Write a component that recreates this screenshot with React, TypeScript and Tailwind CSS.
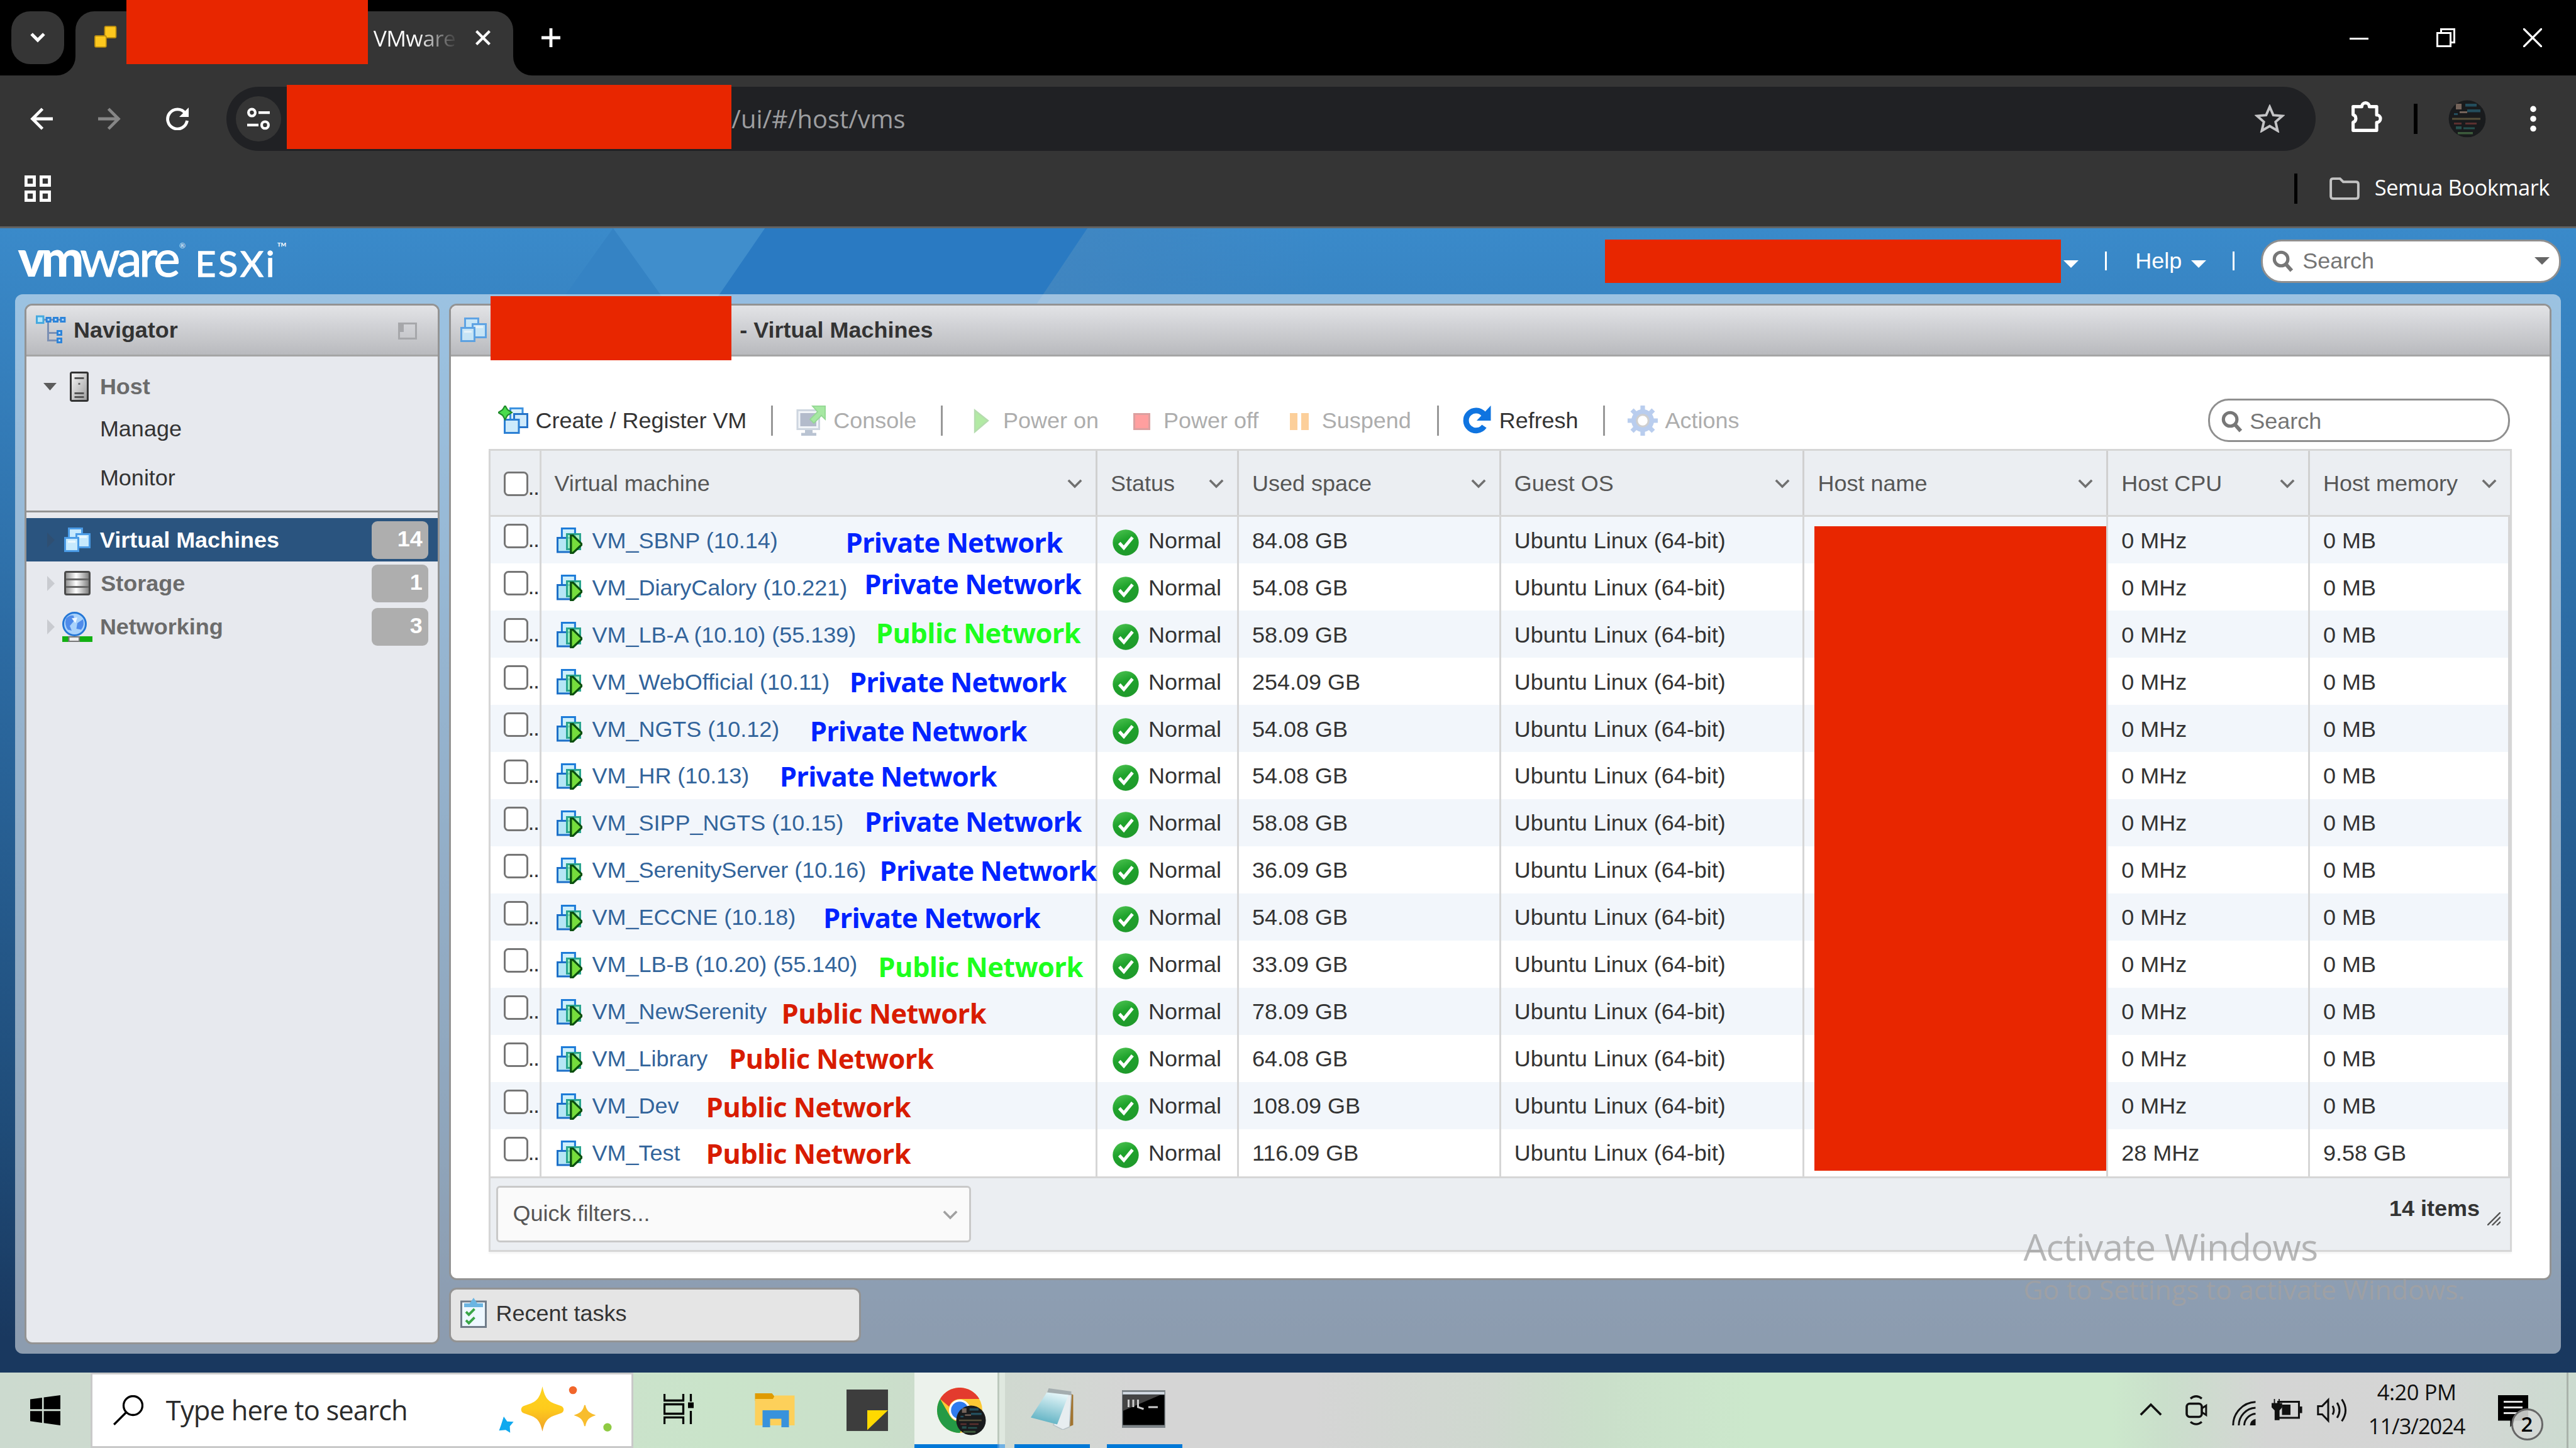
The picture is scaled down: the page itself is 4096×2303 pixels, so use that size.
import React from "react";

type Vm = {
  name: string;
  space: string;
  net: "private" | "green" | "red";
  x: number;
  y: number;
  cpu?: string;
  mem?: string;
};

const VMS: Vm[] = [
  { name: "VM_SBNP (10.14)", space: "84.08 GB", net: "private", x: 449.6, y: 293.6 },
  { name: "VM_DiaryCalory (10.221)", space: "54.08 GB", net: "private", x: 459.5, y: 315.4 },
  { name: "VM_LB-A (10.10) (55.139)", space: "58.09 GB", net: "green", x: 465.7, y: 341.6 },
  { name: "VM_WebOfficial (10.11)", space: "254.09 GB", net: "private", x: 451.7, y: 367.6 },
  { name: "VM_NGTS (10.12)", space: "54.08 GB", net: "private", x: 430.7, y: 393.4 },
  { name: "VM_HR (10.13)", space: "54.08 GB", net: "private", x: 414.7, y: 417.6 },
  { name: "VM_SIPP_NGTS (10.15)", space: "58.08 GB", net: "private", x: 459.7, y: 441.4 },
  { name: "VM_SerenityServer (10.16)", space: "36.09 GB", net: "private", x: 467.6, y: 467.6 },
  { name: "VM_ECCNE (10.18)", space: "54.08 GB", net: "private", x: 437.8, y: 492.6 },
  { name: "VM_LB-B (10.20) (55.140)", space: "33.09 GB", net: "green", x: 466.9, y: 518.5 },
  { name: "VM_NewSerenity", space: "78.09 GB", net: "red", x: 415.6, y: 543.3 },
  { name: "VM_Library", space: "64.08 GB", net: "red", x: 387.7, y: 567.3 },
  { name: "VM_Dev", space: "108.09 GB", net: "red", x: 375.6, y: 592.8 },
  { name: "VM_Test", space: "116.09 GB", net: "red", x: 375.6, y: 617.5, cpu: "28 MHz", mem: "9.58 GB" },
];

const NET_STYLE = {
  private: "text-[#0022ff] tracking-[-0.290px]",
  green: "text-[#1dff1d] tracking-[-0.210px]",
  red: "text-[#d81c00] tracking-[-0.210px]",
};

const COLS = "grid grid-cols-[27px_295px_75px_139px_161px_161px_107px_106px]";

function Redact({ className }: { className: string }) {
  return <div className={`absolute bg-[#e82600] ${className}`} />;
}

/* ---------- Icons ---------- */

function VmsIcon({ className = "", dim = false }: { className?: string; dim?: boolean }) {
  return (
    <svg viewBox="0 0 14 13" className={className} opacity={dim ? 0.85 : 1}>
      <g fill="#c6e9fd" stroke="#4a9be6" strokeWidth="1">
        <rect x="2.5" y=".5" width="7" height="7" />
        <rect x="6.5" y="3.5" width="7" height="7" />
        <rect x=".5" y="5.5" width="7" height="7" />
      </g>
      <path d="M2 7.5h4M8 5h4" stroke="#e9f8ff" strokeWidth="1.2" />
    </svg>
  );
}

function VmOnIcon() {
  return (
    <svg viewBox="0 0 14 14" className="h-[14px] w-[14px] shrink-0">
      <rect x="2.8" y=".5" width="7" height="6" fill="#cdeffc" stroke="#1c7bd8" />
      <rect x=".5" y="5.5" width="7.5" height="7.500" fill="#b5e6f5" stroke="#1c6fc8" />
      <rect x="5.500" y="3.500" width="7" height="8" fill="#8fefaf" fillOpacity=".75" stroke="#2aa58f" />
      <path d="M7.600 4.200v9.300h1.100l4.800-4.600-4.800-4.700z" fill="#76dd3c" stroke="#0b4f10" strokeWidth="1.100" />
    </svg>
  );
}

function CheckIcon() {
  return (
    <svg viewBox="0 0 14 14" className="h-[14px] w-[14px] shrink-0">
      <defs>
        <linearGradient id="okg" x1="0" y1="0" x2="0.4" y2="1">
          <stop offset="0" stopColor="#52c655" />
          <stop offset="0.5" stopColor="#1fa32c" />
          <stop offset="1" stopColor="#1f9a2b" />
        </linearGradient>
      </defs>
      <circle cx="7" cy="7" r="6.9" fill="url(#okg)" />
      <path d="M3.6 7.2l2.4 2.6 4.6-5.6" fill="none" stroke="#fff" strokeWidth="1.7" />
    </svg>
  );
}

function Chevron({ className = "", color = "#707070" }: { className?: string; color?: string }) {
  return (
    <svg viewBox="0 0 8 5" className={`h-[5px] w-[8px] ${className}`}>
      <path d="M.6.6L4 4 7.4.6" fill="none" stroke={color} strokeWidth="1.2" />
    </svg>
  );
}

function CaretDown({ className = "", color = "#fff" }: { className?: string; color?: string }) {
  return (
    <svg viewBox="0 0 8 4" className={`h-[4px] w-[8px] shrink-0 ${className}`}>
      <path d="M0 0h8L4 4z" fill={color} />
    </svg>
  );
}

function SearchIcon({ className = "" }: { className?: string }) {
  return (
    <svg viewBox="0 0 12 12" className={`h-[12px] w-[12px] shrink-0 ${className}`}>
      <circle cx="4.700" cy="5" r="3.600" fill="none" stroke="#777" strokeWidth="1.7" />
      <path d="M7.300 7.800l3 3.400" stroke="#777" strokeWidth="2" />
    </svg>
  );
}

function Avatar({ className = "" }: { className?: string }) {
  return (
    <svg viewBox="0 0 20 20" className={className}>
      <defs>
        <clipPath id="avc">
          <circle cx="10" cy="10" r="9.8" />
        </clipPath>
      </defs>
      <g clipPath="url(#avc)">
        <rect width="20" height="20" fill="#191b1d" />
        <path d="M4 2h3v3H4zM6 6h4v1H6z" fill="#74635a" />
        <path d="M9 2h6v1.500H9zM10 5h7v1.500h-7zM3 7h2v1H3z" fill="#234d5c" />
        <path d="M2 9.500h15v1H2z" fill="#57503a" />
        <path d="M3 12h4v1H3zM9 12h6v1H9z" fill="#5b302f" />
        <path d="M4 14h3v1.500H4zM8 14.500h6v1H8z" fill="#26504e" />
        <path d="M5 17h8v1.200H5z" fill="#3c5a3c" />
      </g>
    </svg>
  );
}

/* ---------- Browser chrome ---------- */

function TabStrip() {
  return (
    <div className="relative flex h-[40px] items-start bg-black text-white">
      <div className="ml-[6px] mt-[6px] flex h-[28px] w-[28px] items-center justify-center rounded-[10px] bg-[#353535]">
        <svg viewBox="0 0 8 6" className="h-[6px] w-[8px]">
          <path d="M.7 1L4 4.300 7.300 1" fill="none" stroke="#fff" strokeWidth="1.700" />
        </svg>
      </div>
      <div className="relative ml-[6px] mt-[6px] flex h-[34px] w-[232px] rounded-t-[10px] bg-[#353535]">
        <svg viewBox="0 0 10 10" className="absolute -left-[10px] bottom-0 h-[10px] w-[10px]">
          <path d="M10 0v10H0A10 10 0 0 0 10 0z" fill="#353535" />
        </svg>
        <svg viewBox="0 0 10 10" className="absolute -right-[10px] bottom-0 h-[10px] w-[10px]">
          <path d="M0 0v10h10A10 10 0 0 1 0 0z" fill="#353535" />
        </svg>
        <svg viewBox="0 0 12 11" className="ml-[10px] mt-[8px] h-[11px] w-[12px] overflow-visible">
          <rect x="5.500" y="0" width="6" height="6" rx=".7" fill="#fdc81e" stroke="#b98d11" strokeWidth=".6" />
          <rect x="0.300" y="5" width="6" height="6" rx=".7" fill="#fdc81e" stroke="#b98d11" strokeWidth=".6" />
        </svg>
        <div className="ml-[136px] mt-[5.500px] w-[46px] whitespace-nowrap bg-gradient-to-r from-white from-50% to-[#353535] to-98% bg-clip-text font-['Open_Sans'] text-[11.800px] leading-[18px] tracking-[-0.200px] text-transparent">
          VMware
        </div>
        <svg viewBox="0 0 8 8" className="ml-[8px] mt-[10px] h-[8px] w-[8px]">
          <path d="M.5.5l7 7M7.500.5l-7 7" stroke="#fff" strokeWidth="1.400" />
        </svg>
      </div>
      <svg viewBox="0 0 10 10" className="ml-[15px] mt-[15px] h-[10px] w-[10px]">
        <path d="M5 0v10M0 5h10" stroke="#fff" strokeWidth="1.600" />
      </svg>
      <div className="ml-auto mr-[18px] mt-[15px] flex gap-[36px]">
        <svg viewBox="0 0 10 10" className="h-[10px] w-[10px]">
          <path d="M0 5.500h10" stroke="#fff" />
        </svg>
        <svg viewBox="0 0 10 10" className="h-[10px] w-[10px]">
          <path d="M.5 2.500h7v7h-7zM2.500 2.500v-2h7v7h-2" fill="none" stroke="#fff" />
        </svg>
        <svg viewBox="0 0 10 10" className="h-[10px] w-[10px]">
          <path d="M0 0l10 10M10 0L0 10" stroke="#fff" strokeWidth="1.100" />
        </svg>
      </div>
      <Redact className="left-[67px] top-0 h-[34px] w-[128px]" />
    </div>
  );
}

function AddressRow() {
  return (
    <div className="relative flex h-[46px] items-center bg-[#353535]">
      <svg viewBox="0 0 12 12" className="ml-[16px] h-[12px] w-[12px]">
        <path d="M12 6H1.200M6.500.700L1.200 6l5.300 5.300" fill="none" stroke="#fff" strokeWidth="1.600" />
      </svg>
      <svg viewBox="0 0 12 12" className="ml-[24px] h-[12px] w-[12px]">
        <path d="M0 6h10.800M5.500.700L10.800 6l-5.300 5.300" fill="none" stroke="#868686" strokeWidth="1.600" />
      </svg>
      <svg viewBox="0 0 12 12" className="ml-[24px] h-[12px] w-[12px]">
        <path d="M10.200 3A5.200 5.200 0 1 0 11.200 7" fill="none" stroke="#fff" strokeWidth="1.600" />
        <path d="M12 0v5H7z" fill="#fff" />
      </svg>
      <div className="ml-[20px] flex h-[34px] w-[1108px] items-center rounded-full bg-[#202124] pl-[5px] pr-[16.500px]">
        <div className="flex h-[24px] w-[24px] items-center justify-center rounded-full bg-[#353535]">
          <svg viewBox="0 0 12 12" className="h-[12px] w-[12px]">
            <g fill="none" stroke="#fff" strokeWidth="1.400">
              <circle cx="2.500" cy="2.700" r="1.800" />
              <path d="M6 2.700h6M0 9.300h6" />
              <circle cx="9.500" cy="9.300" r="1.800" />
            </g>
          </svg>
        </div>
        <div className="ml-[239px] font-['Open_Sans'] text-[13.300px] leading-[20px] text-[#9d9ea0]">/ui/#/host/vms</div>
        <svg viewBox="0 0 16 15" className="ml-auto h-[15px] w-[16px]">
          <path
            d="M8 1.300l1.900 4.400 4.800.4-3.600 3.200 1.100 4.700L8 11.500 3.800 14l1.100-4.700L1.300 6.100l4.800-.4z"
            fill="none"
            stroke="#c4c4c6"
            strokeWidth="1.300"
          />
        </svg>
      </div>
      <svg viewBox="0 0 17 17" className="ml-[18.500px] mb-[2px] h-[17px] w-[17px]">
        <path
          d="M1.200 3.200h4.600a2 2 0 0 1 4 0h3.900v4.400a2 2 0 0 1 0 4v4.200H1.200v-4.300a2.100 2.100 0 0 0 0-4z"
          fill="none"
          stroke="#fff"
          strokeWidth="1.700"
          strokeLinejoin="round"
        />
      </svg>
      <div className="ml-[16.500px] h-[16px] w-[2px] bg-black" />
      <Avatar className="ml-[16.500px] h-[20px] w-[20px]" />
      <svg viewBox="0 0 4 14" className="ml-[23px] h-[14px] w-[4px]">
        <g fill="#fff">
          <circle cx="2" cy="1.800" r="1.600" />
          <circle cx="2" cy="7" r="1.600" />
          <circle cx="2" cy="12.200" r="1.600" />
        </g>
      </svg>
      <Redact className="left-[152px] top-[5px] h-[34px] w-[236px]" />
    </div>
  );
}

function BookmarkRow() {
  return (
    <div className="flex h-[35px] items-center border-b-[1.010px] border-[#636363] bg-[#353535] pb-[6px] pl-[13px] pr-[14px]">
      <svg viewBox="0 0 14 14" className="h-[14px] w-[14px]">
        <g fill="none" stroke="#fff" strokeWidth="1.600">
          <rect x=".8" y=".8" width="4.400" height="4.400" />
          <rect x="8.800" y=".8" width="4.400" height="4.400" />
          <rect x=".8" y="8.800" width="4.400" height="4.400" />
          <rect x="8.800" y="8.800" width="4.400" height="4.400" />
        </g>
      </svg>
      <div className="ml-auto mr-[17px] h-[16px] w-[1.500px] bg-black" />
      <svg viewBox="0 0 16 12" className="mr-[8px] h-[12px] w-[16px]">
        <path
          d="M.7 10V1.900q0-1.200 1.200-1.200h3.700l1.700 1.700h6.800q1.200 0 1.200 1.200V10q0 1.300-1.200 1.300H1.900Q.7 11.300.7 10z"
          fill="none"
          stroke="#c3c3c3"
          strokeWidth="1.300"
        />
      </svg>
      <div className="pb-px font-['Open_Sans'] text-[11.500px] leading-[16px] tracking-[-0.150px] text-white">Semua Bookmark</div>
    </div>
  );
}

/* ---------- ESXi page ---------- */

function EsxiHeader() {
  return (
    <div className="relative flex h-[35px] items-center pr-[8px] text-white">
      <div className="flex items-baseline pb-[1px] pl-[9.500px] font-['Lato'] leading-[30px]">
        <span className="text-[27px] font-black tracking-[-2.100px]">vm</span>
        <span className="text-[27px] tracking-[-1.600px] [-webkit-text-stroke:0.350px_white]">ware</span>
        <span className="w-[9.500px] self-start pl-[1px] pt-[6px] text-[4px] leading-[6px]">®</span>
        <span className="text-[19px] tracking-[1.300px] [-webkit-text-stroke:0.450px_white]">ESXi</span>
        <span className="self-start pt-[6px] text-[7px] leading-[7px]">™</span>
      </div>
      <CaretDown className="ml-auto mt-[3px]" />
      <div className="ml-[14px] h-[10px] w-px bg-white" />
      <div className="ml-[15px] text-[12px] leading-[14px]">Help</div>
      <CaretDown className="ml-[5px] mt-[3px]" />
      <div className="ml-[14px] h-[10px] w-px bg-white" />
      <div className="ml-[14px] flex h-[23px] w-[159px] items-center rounded-[11px] border-[1.010px] border-[#8f8f8f] bg-white pl-[5px] pr-[5px]">
        <SearchIcon />
        <span className="ml-[4px] flex-1 text-[12px] leading-[14px] text-[#757575]">Search</span>
        <CaretDown color="#666" />
      </div>
      <Redact className="left-[851px] top-[6px] h-[23px] w-[242px]" />
    </div>
  );
}

function HeaderPattern() {
  return (
    <svg viewBox="300 121 400 40" className="absolute left-[300px] top-0 h-[40px] w-[400px]" preserveAspectRatio="none">
      <defs>
        <linearGradient id="fade" x1="0" x2="1" y1="0" y2="0">
          <stop offset="0" stopColor="#4285bf" stopOpacity=".8" />
          <stop offset="1" stopColor="#4285bf" stopOpacity="0" />
        </linearGradient>
      </defs>
      <path d="M325 121L300 156v5h54.500z" fill="#3583c4" />
      <path d="M325 121h80.500L381.500 156 378 161h-24.500z" fill="#408ecc" />
      <path d="M405.500 121h171L549.700 161H378z" fill="#2a7ac2" />
      <path d="M576.500 121H700v40H549.700z" fill="url(#fade)" />
    </svg>
  );
}

function NavArrow({ color }: { color: string }) {
  return (
    <svg viewBox="0 0 4 8" className="ml-[11px] mr-[5px] h-[8px] w-[4px]">
      <path d="M0 0l4 4-4 4z" fill={color} />
    </svg>
  );
}

function Badge({ children }: { children: React.ReactNode }) {
  return (
    <div className="ml-auto mr-[5px] h-[20px] w-[30px] rounded-[3px] bg-[#aeaeae] pr-[3px] text-right text-[12px] font-bold leading-[18.500px] text-white">
      {children}
    </div>
  );
}

function Navigator() {
  return (
    <div className="flex w-[220px] flex-col overflow-hidden rounded-[4px] border-[1.010px] border-[#939393] bg-[#e7e9ee]">
      <div className="flex h-[27px] items-center border-b-[1.010px] border-[#a5a5a5] bg-gradient-to-b from-[#e2e3e6] to-[#b9babe] pl-[5px]">
        <svg viewBox="0 0 16 16" className="h-[16px] w-[16px]">
          <path d="M6.500 3v10.500h5M6.500 9.500h5M4 2.500h11" fill="none" stroke="#7b90b4" />
          <rect x=".5" y=".7" width="3.500" height="3.500" fill="#b7e6f9" stroke="#45a9df" />
          <g fill="#b7d6f6" stroke="#2c84da">
            <rect x="5.700" y="1.500" width="2" height="2" />
            <rect x="9.500" y="1.500" width="2" height="2" />
            <rect x="13.300" y="1.500" width="2" height="2" />
            <rect x="11.500" y="8.500" width="2" height="2" />
            <rect x="11.500" y="12.500" width="2" height="2" />
          </g>
        </svg>
        <span className="ml-[4px] text-[12px] font-bold leading-[14px] text-[#333]">Navigator</span>
        <svg viewBox="0 0 10 9" className="ml-auto mr-[11px] mt-[1px] h-[9px] w-[10px]">
          <rect x=".5" y=".5" width="9" height="8" fill="none" stroke="#a6a7aa" />
          <rect x="0" y="0" width="3" height="5" fill="#a6a7aa" />
        </svg>
      </div>
      <div className="flex h-[32px] items-center">
        <svg viewBox="0 0 7 4" className="ml-[9px] h-[4px] w-[7px]">
          <path d="M0 0h7L3.500 4z" fill="#5c5c5c" />
        </svg>
        <svg viewBox="0 0 10 16" className="ml-[7px] h-[16px] w-[10px]">
          <defs>
            <linearGradient id="srv" x1="0" x2="1" y1="0" y2="1">
              <stop offset="0" stopColor="#fafafa" />
              <stop offset="1" stopColor="#9b9b9b" />
            </linearGradient>
          </defs>
          <rect x=".5" y=".5" width="9" height="15" rx=".6" fill="url(#srv)" stroke="#333" />
          <path d="M2.500 3.500h5M2.500 11.500h5M2.500 13.500h5" stroke="#555" />
          <rect x="4.500" y="6" width="1" height="1" fill="#666" />
        </svg>
        <span className="ml-[6px] text-[12px] font-bold leading-[14px] text-[#6b6b6b]">Host</span>
      </div>
      <div className="flex h-[13px] items-center pl-[39px] text-[12px] leading-[14px] text-[#333]">Manage</div>
      <div className="mt-[13px] flex h-[13px] items-center pl-[39px] text-[12px] leading-[14px] text-[#333]">Monitor</div>
      <div className="mt-[11px] h-px bg-[#939393]" />
      <div className="mt-[3px] flex h-[23px] items-center bg-[#2a547f]">
        <NavArrow color="#2f4f72" />
        <VmsIcon className="h-[13px] w-[14px]" />
        <span className="ml-[5px] text-[12px] font-bold leading-[14px] text-white">Virtual Machines</span>
        <Badge>14</Badge>
      </div>
      <div className="flex h-[23px] items-center">
        <NavArrow color="#c9cbd0" />
        <svg viewBox="0 0 14 13" className="h-[13px] w-[14px]">
          <defs>
            <linearGradient id="sto" x1="0" x2="1" y1="0" y2="0">
              <stop offset="0" stopColor="#8a8a8a" />
              <stop offset="0.450" stopColor="#fff" />
              <stop offset="1" stopColor="#777" />
            </linearGradient>
          </defs>
          <rect x=".5" y=".5" width="13" height="12" rx=".8" fill="url(#sto)" stroke="#4a4a4a" />
          <path d="M1 4.500h12M1 8.500h12" stroke="#666" />
        </svg>
        <span className="ml-[5.500px] text-[12px] font-bold leading-[14px] text-[#6b6b6b]">Storage</span>
        <Badge>1</Badge>
      </div>
      <div className="flex h-[23px] items-center">
        <NavArrow color="#c9cbd0" />
        <svg viewBox="0 0 16 16" className="-ml-[1px] h-[16px] w-[16px]">
          <rect x="0" y="13" width="16" height="3" fill="#12b012" />
          <rect x="3.500" y="13.300" width="5.500" height="2.400" fill="#eee" stroke="#777" strokeWidth=".7" />
          <circle cx="6.500" cy="6.500" r="6" fill="#a9d2fb" stroke="#2577d6" />
          <path d="M2 3.500q2-2 4-1.500l.5 2.500-2.500 3 1 2.500-2-.5Q1 7 2 3.500zM8 6l3-2q1 3-1 5.500L7.500 9z" fill="#4f8bea" />
          <path d="M5 3.500l3-.5-1 3z" fill="#eef7ff" />
        </svg>
        <span className="ml-[4px] text-[12px] font-bold leading-[14px] text-[#6b6b6b]">Networking</span>
        <Badge>3</Badge>
      </div>
    </div>
  );
}

function Tool({
  icon,
  label,
  className,
  active = false,
}: {
  icon: React.ReactNode;
  label: string;
  className: string;
  active?: boolean;
}) {
  return (
    <div className={`flex items-center gap-[4px] text-[12px] leading-[14px] ${active ? "text-[#333]" : "text-[#adadad]"} ${className}`}>
      <svg viewBox="0 0 16 16" className="h-[16px] w-[16px] shrink-0">
        {icon}
      </svg>
      <span className="whitespace-nowrap">{label}</span>
    </div>
  );
}

function Sep() {
  return <div className="h-[16px] w-px bg-[#989898]" />;
}

function Toolbar() {
  return (
    <div className="mt-[23px] flex h-[22px] items-center pl-[25px]">
      <Tool
        active
        label="Create / Register VM"
        className="w-[145px]"
        icon={
          <>
            <rect x="6.500" y="1.500" width="6.500" height="7" fill="#d9f0fc" stroke="#3d92e0" />
            <rect x="8.500" y="4.500" width="7" height="7" fill="#cfeafb" stroke="#2472c8" />
            <rect x="3.500" y="7.500" width="7.500" height="7" fill="#cdeafb" stroke="#2b7fd4" />
            <path d="M3.700 0l1.300 2.200L7.300 3.700 5 5.200 3.700 7.500 2.400 5.200.1 3.700l2.300-1.500z" fill="#4bdc4b" stroke="#1f8a2a" strokeWidth=".7" />
          </>
        }
      />
      <Sep />
      <Tool
        label="Console"
        className="w-[89px] pl-[12px]"
        icon={
          <>
            <rect x="1" y="2.500" width="11.500" height="10" fill="#f1f4f8" stroke="#ced6e0" />
            <rect x="2.500" y="4" width="8.500" height="7" fill="#b3bbcb" />
            <path d="M5 13h4v1.500h2v1.500H3v-1.500h2z" fill="#b9c3d2" />
            <path d="M9 .3h6.700v7l-2-2-4 4-2-2 4-4z" fill="#a6e8a2" stroke="#94d894" strokeWidth=".6" />
          </>
        }
      />
      <Sep />
      <Tool label="Power on" className="w-[97px] pl-[12px]" icon={<path d="M5 2.500L12 8l-7 6z" fill="#b2eaa4" stroke="#b5dcae" strokeWidth=".8" />} />
      <Tool
        label="Power off"
        className="w-[84px]"
        icon={<rect x="4.500" y="4.500" width="8" height="8" fill="#ff9f9f" stroke="#dba0a0" />}
      />
      <Tool label="Suspend" className="w-[81px]" icon={<path d="M3 4h4v9H3zM9 4h4v9H9z" fill="#fccf9a" />} />
      <Sep />
      <Tool
        active
        label="Refresh"
        className="w-[87px] pl-[12px]"
        icon={
          <>
            <path d="M11.700 4.500A5.300 5.300 0 1 0 12 11" fill="none" stroke="#0f74e0" strokeWidth="3" />
            <path d="M15.500 0v8H8z" fill="#0f74e0" />
          </>
        }
      />
      <Sep />
      <Tool
        label="Actions"
        className="w-[90px] pl-[12px]"
        icon={
          <>
            <g fill="#b9cdee">
              <path d="M6.800 0h2.400v16H6.800zM0 6.800h16v2.400H0z" />
              <path d="M6.800 0h2.400v16H6.800zM0 6.800h16v2.400H0z" transform="rotate(45 8 8)" />
            </g>
            <circle cx="8" cy="8" r="4.500" fill="none" stroke="#b9cdee" strokeWidth="3" />
            <circle cx="8" cy="8" r="3.100" fill="#fff" stroke="#cfcfcf" />
          </>
        }
      />
      <div className="ml-auto mr-[21px] flex h-[23px] w-[160px] shrink-0 items-center rounded-[11px] border-[1.010px] border-[#8f8f8f] bg-white pl-[6px] pt-px">
        <SearchIcon />
        <span className="ml-[3px] text-[12px] leading-[14px] text-[#757575]">Search</span>
      </div>
    </div>
  );
}

function HeadCell({ children }: { children: React.ReactNode }) {
  return (
    <div className="flex items-center border-r-[1.010px] border-[#d0d0d0] pl-[7px] pr-[7px] pt-px text-[#565656] last:border-r-0">
      <span className="whitespace-nowrap">{children}</span>
      <Chevron className="ml-auto" />
    </div>
  );
}

function Cell({ children }: { children?: React.ReactNode }) {
  return <div className="flex items-center border-r-[1.010px] border-[#d6d6d6] pl-[7px] pt-[0.500px] last:border-r-0">{children}</div>;
}

function CheckCell({ className }: { className: string }) {
  return (
    <div className={`flex border-r-[1.010px] border-[#d6d6d6] pl-[7px] ${className}`}>
      <div className="h-[13px] w-[13px] shrink-0 rounded-[2.500px] border-[1.010px] border-[#767676] bg-white" />
      <span className="leading-[17px] tracking-[-0.500px]">..</span>
    </div>
  );
}

function VmTable() {
  return (
    <div className="relative ml-[20px] mt-[4px] w-[1073px] border-[1.010px] border-[#d6d6d6] text-[12px] leading-[14px] text-[#333] shadow-[0_1px_1px_rgba(0,0,0,0.05)]">
      <div className={`${COLS} h-[35px] border-b-[1.010px] border-[#d6d6d6] bg-[#ebeef2]`}>
        <CheckCell className="pt-[11px]" />
        <HeadCell>Virtual machine</HeadCell>
        <HeadCell>Status</HeadCell>
        <HeadCell>Used space</HeadCell>
        <HeadCell>Guest OS</HeadCell>
        <HeadCell>Host name</HeadCell>
        <HeadCell>Host CPU</HeadCell>
        <HeadCell>Host memory</HeadCell>
      </div>
      {VMS.map((vm, i) => (
        <div key={vm.name} className={`${COLS} relative h-[25px] ${i % 2 ? "bg-white" : "bg-[#f2f6fb]"}`}>
          <CheckCell className="pt-[4px]" />
          <Cell>
            <div className="ml-px flex items-center gap-[5px] whitespace-nowrap text-[#32649b]">
              <div className="pt-[0.500px]">
                <VmOnIcon />
              </div>
              {vm.name}
            </div>
          </Cell>
          <Cell>
            <div className="ml-px mr-[5px] mt-[2px]">
              <CheckIcon />
            </div>
            Normal
          </Cell>
          <Cell>{vm.space}</Cell>
          <Cell>Ubuntu Linux (64-bit)</Cell>
          <Cell />
          <Cell>{vm.cpu ?? "0 MHz"}</Cell>
          <Cell>{vm.mem ?? "0 MB"}</Cell>
          <div
            className={`absolute z-10 whitespace-nowrap font-['Open_Sans'] text-[14.500px] font-bold leading-[20px] ${NET_STYLE[vm.net]}`}
            style={{ left: vm.x - 261.2, top: vm.y - 15.6 - (274 + 25 * i) }}
          >
            {vm.net === "private" ? "Private Network" : "Public Network"}
          </div>
        </div>
      ))}
      <div className="flex h-[39px] border-t-[1.010px] border-[#d6d6d6] bg-[#ebeef2] pl-[3px]">
        <div className="mt-[4px] flex h-[30px] w-[252px] items-center rounded-[2px] border-[1.010px] border-[#c9c9c9] bg-[#fafafa] pl-[8px] pr-[6px] text-[#565656]">
          <span className="pb-[0.500px]">Quick filters...</span>
          <Chevron className="ml-auto mt-px" color="#a0a0a0" />
        </div>
        <div className="ml-auto mt-[9px] font-bold">14 items</div>
        <svg viewBox="0 0 7 7" className="ml-[4px] mr-[5px] mt-[18px] h-[7px] w-[7px]">
          <path d="M0 7l7-7M2.500 7L7 2.500M5 7l2-2" stroke="#555" strokeWidth=".8" />
        </svg>
      </div>
      <Redact className="left-[702px] top-[40px] z-20 h-[342px] w-[155px]" />
    </div>
  );
}

function MainPanel() {
  return (
    <div className="relative h-[518px]">
      <div className="h-full overflow-hidden rounded-[4px] border-[1.010px] border-[#939393] bg-white">
        <div className="flex h-[27px] items-center border-b-[1.010px] border-[#a5a5a5] bg-gradient-to-b from-[#e2e3e6] to-[#b9babe] pl-[5px]">
          <VmsIcon className="h-[13px] w-[14px]" dim />
          <div className="ml-[134.300px] text-[12px] font-bold leading-[14px] text-[#333]">- Virtual Machines</div>
        </div>
        <Toolbar />
        <VmTable />
      </div>
      <Redact className="-top-[4px] left-[22px] h-[34px] w-[128px]" />
    </div>
  );
}

function RecentTasks() {
  return (
    <div className="flex h-[29px] w-[218.500px] items-center rounded-[4px] border-[1.010px] border-[#939393] bg-[#e5e5e5] pl-[5px]">
      <svg viewBox="0 0 14 16" className="mb-[2px] h-[16px] w-[14px]">
        <rect x=".5" y="2" width="13" height="13.500" fill="#eef8ff" stroke="#6f7b88" />
        <path d="M2 5V3h3l2-3 2 3h3v2z" fill="#6bb5e2" />
        <path d="M3 7.500l1.500 1.500L7.500 6M3 12l1.500 1.500L7.500 10.500" fill="none" stroke="#3aa648" strokeWidth="1.300" />
      </svg>
      <span className="mb-[1.500px] ml-[5px] text-[12px] leading-[14px] text-[#333]">Recent tasks</span>
    </div>
  );
}

/* ---------- Windows taskbar ---------- */

function Tile({ className, children }: { className: string; children: React.ReactNode }) {
  return <div className={`flex h-[40px] items-center justify-center ${className}`}>{children}</div>;
}

function Taskbar() {
  return (
    <div className="flex h-[40px] bg-[linear-gradient(90deg,#ccdacf_0%,#cddacf_4%,#cae4ca_28%,#cadfca_34%,#d0d9d0_39%,#d5d5d5_44%,#d5d5d5_51%,#cfd8cf_58%,#cadfca_62%,#cce8cc_68%,#cce8cc_82%,#cadfcb_84%,#d4d5d4_88%,#d5d5d5_94%,#ccdbd0_100%)]">
      <Tile className="w-[48px]">
        <svg viewBox="0 0 16 16" className="h-[16px] w-[16px]">
          <path d="M0 2.200l6.300-.9v6.100H0zM7.200 1.200L16 0v7.400H7.200zM0 8.400h6.300v6.300L0 13.800zM7.200 8.400H16V16l-8.800-1.200z" fill="#000" />
        </svg>
      </Tile>
      <div className="relative flex w-[288px] items-center border-[1.010px] border-[#c9c9c9] bg-white pl-[11px]">
        <svg viewBox="0 0 16 16" className="h-[16px] w-[16px]">
          <circle cx="10.500" cy="5.500" r="5" fill="none" stroke="#000" strokeWidth="1.100" />
          <path d="M7 9L.4 15.600" stroke="#000" strokeWidth="1.100" />
        </svg>
        <span className="ml-[12px] whitespace-nowrap font-['Open_Sans'] text-[14.500px] leading-[20px] tracking-[-0.280px] text-[#2b2b2b]">
          Type here to search
        </span>
        <svg viewBox="264 735 62 26" className="mb-px ml-auto mr-[10px] h-[26px] w-[62px]">
          <defs>
            <linearGradient id="spk" x1="0" y1="0" x2="0" y2="1">
              <stop offset="0" stopColor="#fdd422" />
              <stop offset="0.500" stopColor="#fecb1c" />
              <stop offset="1" stopColor="#f0a02a" />
            </linearGradient>
          </defs>
          <path d="M288.500 736c1.200 5.500 2.500 7.500 6 9l4 1.400c1.700.8 1.700 3 0 3.800l-4 1.400c-3.500 1.300-4.800 3.200-6 8.300-1.200-5.100-2.500-7-6-8.300l-4-1.400c-1.700-.8-1.700-3 0-3.800l4-1.400c3.500-1.500 4.800-3.500 6-9z" fill="url(#spk)" />
          <path d="M311 746c.7 3 1.700 4 5 5.300-3.300 1.200-4.300 2.400-5 5.700-.7-3.300-1.700-4.500-5-5.700 3.300-1.300 4.300-2.300 5-5.300z" fill="#f8bd2d" stroke="#f8bd2d" strokeWidth=".6" />
          <path d="M268 752l1.800 2.600 3.400.2-2 2.400.2 3.400-2.400-1.500-3.500.3 1-2.700z" fill="#10a9ef" />
          <circle cx="304.700" cy="738" r="2.100" fill="#f1662b" />
          <circle cx="323" cy="757.700" r="2.200" fill="#8fca43" />
        </svg>
      </div>
      <Tile className="w-[48px]">
        <svg viewBox="0 0 16 16" className="mb-px h-[16px] w-[16px]">
          <path d="M.5 0v3.500h10V0M.5 16v-3.500h10V16M.5 5.500h10v5H.500zM14.500 0v4M14.500 9v7" fill="none" stroke="#000" strokeWidth="1.100" />
          <rect x="13" y="4.500" width="3" height="3" fill="#000" />
        </svg>
      </Tile>
      <Tile className="w-[54px]">
        <svg viewBox="0 0 22 18" className="h-[18px] w-[22px]">
          <path d="M.5 0h9l1.200 1.500V4H.500z" fill="#df9b00" />
          <path d="M.5 3h9.500l1-1.800H21.500V17H.500z" fill="#fdd05a" />
          <path d="M4.500 9h14v9h-4v-4.500h-6V18h-4z" fill="#3892dc" />
        </svg>
      </Tile>
      <Tile className="w-[44px]">
        <svg viewBox="0 0 22 22" className="h-[22px] w-[22px]">
          <rect width="22" height="22" fill="#3d3d3d" />
          <path d="M11 11h11L11 21.500z" fill="#ffd900" />
        </svg>
      </Tile>
      <Tile className="relative ml-[3px] w-[44px] border-b-[2.010px] border-[#0078d7] bg-[#ecf2ec]">
        <svg viewBox="0 0 26 26" className="ml-[6px] mt-[4px] h-[26px] w-[26px]">
          <circle cx="12" cy="12" r="12" fill="#fcc934" />
          <path d="M1.600 6A12 12 0 0 1 22.400 6H12a6 6 0 0 0-5.600 4.100z" fill="#e33b2e" />
          <path d="M1.600 6A12 12 0 0 0 12 24l5.200-9-5.200 3a6 6 0 0 1-5.200-3z" fill="#249a45" />
          <circle cx="12" cy="12" r="5.700" fill="#fff" />
          <circle cx="12" cy="12" r="4.600" fill="#2f7bee" />
        </svg>
        <Avatar className="absolute left-[22px] top-[17.500px] h-[16px] w-[16px]" />
      </Tile>
      <div className="h-[40px] w-px border-b-[2.010px] border-[#3f93dc] bg-[#bcc8bd]" />
      <div className="h-[40px] w-[3px] border-b-[2.010px] border-[#6fb0e4] bg-[#dfe8df]" />
      <Tile className="ml-[5px] w-[40px] border-b-[2.010px] border-[#0078d7]">
        <svg viewBox="0 0 23 22" className="mt-[1px] h-[22px] w-[23px]">
          <defs>
            <linearGradient id="ntp" x1="0.600" y1="0" x2="0.300" y2="1">
              <stop offset="0" stopColor="#e4f5f8" />
              <stop offset="1" stopColor="#58aec0" />
            </linearGradient>
          </defs>
          <path d="M20.500 2.500l2 1v16l-2.500 1z" fill="#a1742f" />
          <path d="M20 2.500l1.500 1-1 17-3.500 1.500-5-2.500z" fill="#e7edf0" stroke="#b7c1c6" strokeWidth=".5" />
          <path d="M9.500 0l12 1.700v2l-13-1z" fill="#a4adaf" />
          <path d="M8.500 2.200L20 3.500 14 19.200 0 15.500z" fill="url(#ntp)" />
        </svg>
      </Tile>
      <Tile className="ml-[9px] w-[40px] border-b-[2.010px] border-[#0078d7]">
        <svg viewBox="0 0 23 20" className="mr-px mt-px h-[20px] w-[23px]">
          <rect width="23" height="20" fill="#7d8488" />
          <rect x=".5" y="1" width="22" height="1.200" fill="#d5dde6" />
          <rect x=".5" y="2.500" width="22" height="16" fill="#000" />
          <path d="M.5 2.500h20L.5 11z" fill="#444" />
          <path d="M3.500 5v4M6 5v4M8.500 5v4l3 1M14 9h5" stroke="#ccc" strokeWidth="1" fill="none" />
        </svg>
      </Tile>

      <div className="ml-auto flex pr-[4px] text-black">
        <svg viewBox="0 0 12 7" className="mt-[16px] h-[7px] w-[12px]">
          <path d="M.6 6.400L6 1l5.400 5.400" fill="none" stroke="#111" strokeWidth="1.200" />
        </svg>
        <svg viewBox="0 0 12 16" className="ml-[12px] mt-[12px] h-[16px] w-[12px]">
          <path d="M3 1.800Q6-.600 9 1.800M3 14.200q3 2.400 6 0" fill="none" stroke="#111" strokeWidth="1.100" />
          <rect x="1" y="4.500" width="8" height="7" rx="1.600" fill="none" stroke="#111" strokeWidth="1.200" />
          <path d="M9 7l2.300-1.500v5L9 9" fill="none" stroke="#111" />
        </svg>
        <svg viewBox="0 0 13 13" className="ml-[13px] mt-[15px] h-[13px] w-[13px]">
          <g fill="none" stroke="#111" strokeWidth="1">
            <path d="M.6 13A12.400 12.400 0 0 1 12.500.600" />
            <path d="M3.600 13A9.400 9.400 0 0 1 12.500 3.700" />
            <path d="M6.500 13A6.500 6.500 0 0 1 12.500 6.800" />
          </g>
          <path d="M9.500 13a3.500 3.500 0 0 1 3-3.400V13z" fill="#111" />
        </svg>
        <svg viewBox="0 0 16 11" className="ml-[8px] mt-[14px] h-[11px] w-[16px] overflow-visible">
          <rect x="3.500" y="1.500" width="11" height="8.500" fill="none" stroke="#111" />
          <rect x="5.500" y="3" width="4.500" height="5.500" fill="#111" />
          <rect x="15" y="4" width="1.200" height="3.500" fill="#111" />
          <path d="M1.500 0v2.500M4 0v2.500M.3 2.500h5v1.800L3.900 6v5H1.900V6L.3 4.300z" fill="#111" stroke="#111" strokeWidth=".6" />
        </svg>
        <svg viewBox="0 0 17 14" className="ml-[8px] mt-[13px] h-[14px] w-[17px]">
          <path d="M.6 4.800h2.200L6 1.500v11L2.800 9.200H.6z" fill="none" stroke="#111" />
          <path d="M8.300 4.700q1.400 2.300 0 4.600M10.700 3q2.600 4 0 8M13.200 1.200q4 5.800 0 11.600" fill="none" stroke="#111" />
        </svg>
        <div className="ml-[10px] w-[52px] text-center font-['Open_Sans'] text-[11.500px] leading-[18px] tracking-[-0.350px] text-[#111]">
          <div className="mt-[1.500px] tracking-[-0.150px]">4:20 PM</div>
          <div>11/3/2024</div>
        </div>
        <div className="relative ml-[17px] mt-[12px] h-[24px] w-[25px]">
          <svg viewBox="0 0 16 18" className="h-[18px] w-[16px]">
            <path d="M0 0h16v13.500H9L6.500 17v-3.500H0z" fill="#000" />
            <path d="M3 3.500h10M3 6.500h10M3 9.500h7" stroke="#e2e2e2" />
          </svg>
          <div className="absolute left-[7px] top-[7px] flex h-[17px] w-[17px] items-center justify-center rounded-full border-[1.010px] border-[#666] bg-[#d5d8d5]/90 font-['Open_Sans'] text-[11px] font-semibold leading-[14px]">
            2
          </div>
        </div>
        <div className="ml-[11.500px] h-[40px] w-px bg-[#a9b3ab]" />
      </div>
    </div>
  );
}

export default function App() {
  return (
    <div className="h-[2303px] w-[4096px] overflow-hidden bg-black">
      <div className="relative w-[1366px] [zoom:2.9985] font-['Liberation_Sans',Arial,sans-serif]">
        <TabStrip />
        <AddressRow />
        <BookmarkRow />
        <div className="relative h-[607px] bg-[linear-gradient(180deg,#3a8aca_0%,#2c6ba3_36%,#1f4c79_78%,#19385f_97%)]">
          <HeaderPattern />
          <EsxiHeader />
          <div className="relative mx-[8px] flex h-[562px] gap-[5px] rounded-[4px] bg-white/50 p-[5px]">
            <Navigator />
            <div className="flex flex-1 flex-col gap-[4px]">
              <MainPanel />
              <RecentTasks />
            </div>
          </div>
          <div className="pointer-events-none absolute left-[1073px] top-[527px] whitespace-nowrap font-['Open_Sans'] text-[#9a9a9a]/70">
            <div className="text-[19.500px] leading-[27px] tracking-[-0.250px]">Activate Windows</div>
            <div className="text-[14.300px] leading-[18px] text-[#a3a1a1]/80">Go to Settings to activate Windows.</div>
          </div>
        </div>
        <Taskbar />
      </div>
    </div>
  );
}
